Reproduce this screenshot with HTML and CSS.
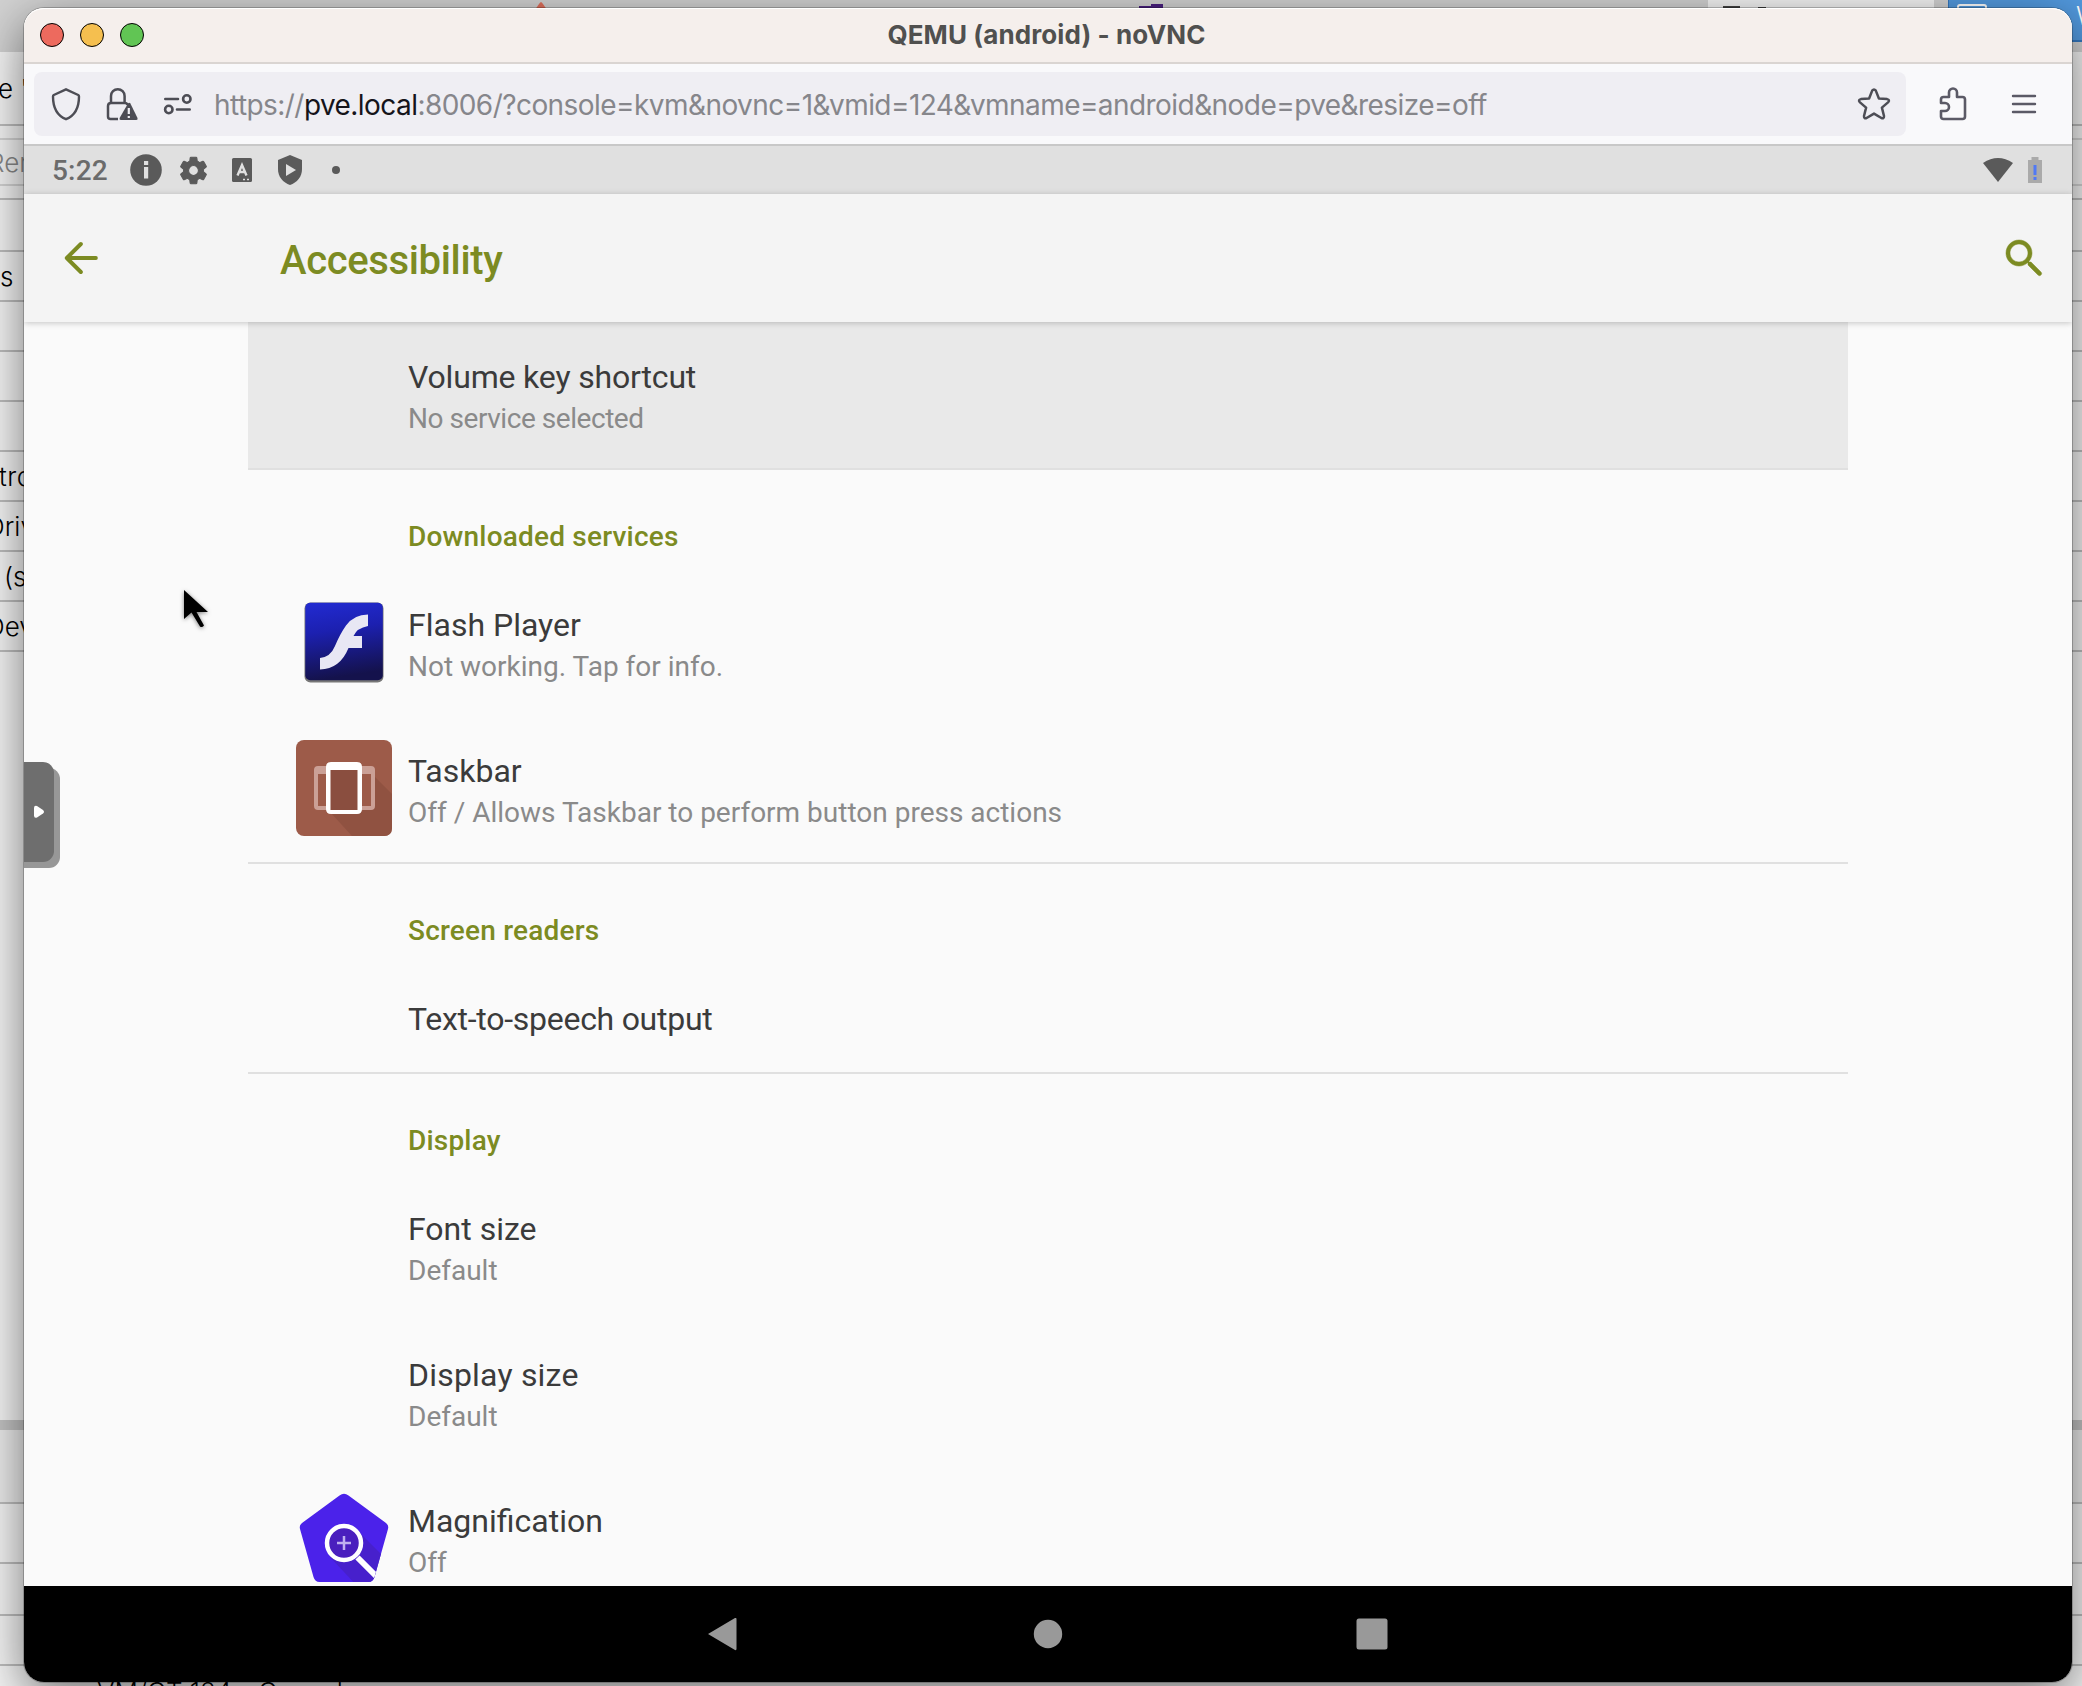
FILE: index.html
```html
<!DOCTYPE html>
<html lang="en">
<head>
<meta charset="utf-8">
<title>QEMU (android) - noVNC</title>
<link rel="stylesheet" href="styles.css">
</head>
<body>
<div class="desktop">
  <div class="backdrop">
    <div class="tabs">
      <svg class="tab-marks" width="1200" height="42" viewBox="0 0 1200 42"><path d="M535 10q5-8 6-8t6 8z" fill="#e0705c"/><path d="M1139 6h12v-2h12v8h-24z" fill="#4a2080"/></svg>
      <div class="tab-light"><svg width="60" height="12" viewBox="0 0 60 12"><path d="M15 6h17v6H15zM50 7h8v5h-8z" fill="#444"/></svg></div>
      <div class="tab-blue"><svg width="40" height="20" viewBox="0 0 40 20"><rect x="9" y="5" width="28" height="20" rx="2" fill="none" stroke="#fff" stroke-width="2"/></svg><span>W</span></div>
    </div>
    <div class="gap"></div>
    <div class="strip s-head"><span>e "</span></div>
    <div class="strip s-14 light"></div>
    <div class="strip s-46 faint"><span>Rem</span></div>
    <div class="strip s-14"></div>
    <div class="strip s-52"></div>
    <div class="strip"><span class="near">s</span></div>
    <div class="strip"></div>
    <div class="strip"></div>
    <div class="strip"></div>
    <div class="strip"><span class="tro">tro</span></div>
    <div class="strip"><span class="cap">Driv</span></div>
    <div class="strip"><span class="in">(s</span></div>
    <div class="strip"><span class="cap">Dev</span></div>
    <div class="blank"></div>
    <div class="splitter"></div>
    <div class="strip s-74 shade"></div>
    <div class="strip s-60"></div>
    <div class="strip s-52"></div>
    <div class="strip"></div>
    <div class="task"><span>VM/CT 124 - Console</span></div>
  </div>

  <div class="window">
    <div class="titlebar">
      <div class="lights"><i class="red"></i><i class="yellow"></i><i class="green"></i></div>
      <div class="title">QEMU (android) - noVNC</div>
    </div>
    <div class="toolbar">
      <div class="urlbar">
        <svg class="i-shield" width="32" height="36" viewBox="0 0 32 36" fill="none" stroke="#4d4d55" stroke-width="2.4" stroke-linejoin="round"><path d="M16 3.3L28.2 9q.8.5.8 1.4C29 21 25 29.500 16 33.200 7 29.500 3 21 3 10.400q0-.9.8-1.400z"/></svg>
        <svg class="i-lock" width="34" height="36" viewBox="0 0 34 36"><g fill="none" stroke="#4d4d55" stroke-width="2.500"><path d="M6 17V10a6.800 6.800 0 0 1 13.600 0v7M13 33H5.500Q3 33 3 30.500V20q0-3 3-3h14q2 0 2.500 2"/></g><path d="M23 17.500q1.200-1.600 2.400 0L32.500 32q.6 2-1.200 2H15.800q-1.800 0-1.200-2z" fill="#4d4d55"/><path d="M23.800 22v6M23.800 30v2" stroke="#efeef3" stroke-width="2.200"/></svg>
        <svg class="i-sliders" width="30" height="24" viewBox="0 0 30 24" fill="none" stroke="#4d4d55" stroke-width="2.600" stroke-linecap="round"><path d="M2.300 7H15M14 17.500h12.700"/><circle cx="23.800" cy="7" r="3.700"/><circle cx="5.800" cy="17.500" r="3.700"/></svg>
        <div class="url">https://<b>pve.local</b>:8006/?console=kvm&amp;novnc=1&amp;vmid=124&amp;vmname=android&amp;node=pve&amp;resize=off</div>
        <svg class="i-star" width="34" height="34" viewBox="0 0 34 34" fill="none" stroke="#4d4d55" stroke-width="2.500" stroke-linejoin="round"><path d="M15.200 3.600q1.800-2.400 3.600 0L21.900 11.500l8.200.6q3 .7 1.200 3l-6.400 5.500 2.100 8.400q.1 2.900-2.600 2L17 26.600 9.600 31q-2.700.9-2.600-2l2.100-8.400-6.400-5.500q-1.800-2.300 1.200-3l8.200-.6z"/></svg>
      </div>
      <svg class="i-puzzle" width="30" height="36" viewBox="0 0 30 36" fill="none" stroke="#5b5a66" stroke-width="2.600" stroke-linejoin="round"><path d="M3 17V13.500Q3 11 5.500 11H11V6.500a4 4 0 0 1 8 0V11h5.500Q27 11 27 13.500v17Q27 33 24.500 33h-19Q3 33 3 30.500V25h4a4 4 0 0 0 0-8z"/></svg>
      <svg class="i-menu" width="26" height="20" viewBox="0 0 26 20" stroke="#5b5a66" stroke-width="2.400" stroke-linecap="round"><path d="M2 2h22M2 10h22M2 18h22"/></svg>
    </div>

    <div class="screen">
      <div class="status">
        <span class="clock">5:22</span>
        <svg class="st" width="36" height="36" viewBox="0 0 36 36"><circle cx="18" cy="18" r="15.800" fill="#5a5a5a"/><path d="M16 15h4.200V26.500H16zM16 9h4.200v4H16z" fill="#e0e0e0"/></svg>
        <svg class="st st2" width="33" height="33" viewBox="0 0 24 24"><path fill="#5a5a5a" stroke="#5a5a5a" stroke-width=".8" d="M19.140 12.940c.04-.3.06-.61.06-.94 0-.32-.02-.64-.07-.94l2.030-1.580c.18-.14.23-.41.120-.61l-1.920-3.320c-.12-.22-.37-.29-.59-.22l-2.390.96c-.5-.38-1.030-.7-1.620-.94l-.36-2.540c-.04-.24-.24-.41-.48-.41h-3.840c-.24 0-.43.17-.47.41l-.36 2.540c-.59.24-1.130.57-1.620.94l-2.390-.96c-.22-.08-.47 0-.59.22L2.740 8.870c-.12.210-.08.470.12.610l2.030 1.580c-.05.300-.09.630-.09.940s.02.640.07.940l-2.030 1.580c-.18.140-.23.410-.12.610l1.920 3.320c.12.220.37.290.59.220l2.390-.96c.5.380 1.030.7 1.620.94l.36 2.540c.05.240.24.410.48.410h3.840c.24 0 .44-.17.47-.41l.36-2.540c.59-.24 1.130-.56 1.620-.94l2.390.96c.22.080.47 0 .59-.22l1.920-3.320c.12-.22.07-.47-.12-.61l-2.010-1.580zM12 15.600c-1.980 0-3.600-1.620-3.600-3.600s1.620-3.600 3.600-3.600 3.600 1.620 3.600 3.600-1.620 3.600-3.600 3.600z"/></svg>
        <svg class="st st3" width="22" height="26" viewBox="0 0 22 26"><rect x="1" y="1" width="20" height="24" rx="1.500" fill="#5a5a5a"/><path d="M6.500 18.500L11 8l4.500 10.500M8.500 15h5" fill="none" stroke="#e0e0e0" stroke-width="2.400"/><path d="M12 22.500h2M16 22.500h2" stroke="#e0e0e0" stroke-width="1.600"/></svg>
        <svg class="st st4" width="28" height="32" viewBox="0 0 28 32"><path d="M14 1l12 5v9c0 8-5 13.500-12 16C7 28.500 2 23 2 15V6z" fill="#5a5a5a"/><path d="M10 10l10 6-10 6z" fill="#e0e0e0"/></svg>
        <i class="dot"></i>
        <svg class="wifi" width="32" height="28" viewBox="0 0 32 28"><path d="M1 7Q16-3 31 7L16 26z" fill="#5a5a5a"/></svg>
        <svg class="battery" width="16" height="28" viewBox="0 0 16 28"><path d="M4.500 1h7v3H15v23H1V4h3.500z" fill="#aaa"/><path d="M8 9v10M8 21v3" stroke="#5079f5" stroke-width="3"/></svg>
      </div>
      <div class="appbar">
        <svg width="48" height="48" viewBox="0 0 24 24" fill="#7c8b22"><path d="M20 11H7.830l5.290-5.290q.7-.7 0-1.400t-1.400 0L4.700 11.300q-.7.7 0 1.400l7.020 7q.7.700 1.400 0t0-1.400L7.830 13H20q.9-.1.900-1T20 11z"/></svg>
        <h1>Accessibility</h1>
        <svg class="find" width="48" height="48" viewBox="0 0 24 24" fill="#7c8b22" stroke="#7c8b22" stroke-width=".25"><path d="M15.500 14h-.79l-.28-.27C15.410 12.590 16 11.110 16 9.500 16 5.910 13.090 3 9.500 3S3 5.910 3 9.500 5.910 16 9.500 16c1.610 0 3.090-.59 4.230-1.570l.27.280v.79l5 4.990q.8.700 1.490 0t0-1.490l-4.990-5zm-6 0C7.010 14 5 11.990 5 9.500S7.010 5 9.500 5 14 7.010 14 9.500 11.990 14 9.500 14z"/></svg>
      </div>
      <div class="content">
        <div class="list">
          <section>
            <div class="row hot"><div class="icon"></div><div class="txt"><h3 class="snug">Volume key shortcut</h3><p class="tight">No service selected</p></div></div>
          </section>
          <section>
            <h2>Downloaded services</h2>
            <div class="row"><div class="icon">
              <svg width="96" height="96" viewBox="0 0 96 96"><defs><linearGradient id="fl" x1="0" y1="0" x2=".15" y2="1"><stop offset="0" stop-color="#222bd2"/><stop offset=".4" stop-color="#1c20b0"/><stop offset="1" stop-color="#14124c"/></linearGradient></defs><rect x="8.500" y="8.500" width="79" height="80" rx="6" fill="#777"/><rect x="9.300" y="8.800" width="77.500" height="77.500" rx="5" fill="url(#fl)"/><path d="M72 20.500V32Q61 34 57.500 42H66V54H52.500Q44 75 24 75.500V64Q34.500 63 39 52 44 40 50 31.500 58 20.500 72 20.500z" fill="#e8e7f4"/></svg>
            </div><div class="txt"><h3>Flash Player</h3><p>Not working. Tap for info.</p></div></div>
            <div class="row"><div class="icon">
              <svg width="96" height="96" viewBox="0 0 96 96"><rect width="96" height="96" rx="8" fill="#9d5b49"/><path d="M35 73L56 96H88q8 0 8-8V54L78 36V64L62 73z" fill="#905241"/><path d="M34 29h28v42H34z" fill="#8a4e3f"/><path d="M18 30q0-4 4-4h10v8H22v32h10v4H22q-4 0-4-4zM79 30q0-4-4-4H65v8h10v32H65v4h10q4 0 4-4z" fill="#cba096"/><path fill-rule="evenodd" d="M35 22h26q5 0 5 5v42q0 5-5 5H35q-5 0-5-5V27q0-5 5-5zM34.500 30v40h27V30z" fill="#fff"/></svg>
            </div><div class="txt"><h3>Taskbar</h3><p>Off / Allows Taskbar to perform button press actions</p></div></div>
          </section>
          <section>
            <h2>Screen readers</h2>
            <div class="row single"><div class="icon"></div><div class="txt"><h3 class="close">Text-to-speech output</h3></div></div>
          </section>
          <section>
            <h2>Display</h2>
            <div class="row"><div class="icon"></div><div class="txt"><h3>Font size</h3><p>Default</p></div></div>
            <div class="row"><div class="icon"></div><div class="txt"><h3 class="wide">Display size</h3><p>Default</p></div></div>
            <div class="row"><div class="icon">
              <svg width="96" height="96" viewBox="0 -1 96 96"><defs><clipPath id="pg"><path d="M43.500 4.500Q48 1 52.500 4.500L90 32q3 2.500 2 6L78.500 86q-1.500 5-6 5h-49q-4.500 0-6-5L4 38q-1-3.500 2-6z"/></clipPath></defs><g clip-path="url(#pg)"><path d="M0 0h96v96H0z" fill="#4b22ea"/><path d="M61 39L96 74V96H62L34 66z" fill="#4720cc"/><circle cx="48" cy="52" r="17" fill="#4a1fbe" stroke="#fff" stroke-width="4.500"/><path d="M61.500 66.500L80 85" stroke="#fff" stroke-width="6"/><path d="M48 45v14M41 52h14" stroke="#c0b0f0" stroke-width="2.500"/></g></svg>
            </div><div class="txt"><h3>Magnification</h3><p>Off</p></div></div>
          </section>
        </div>
        <div class="handle"><svg width="12" height="14" viewBox="0 0 12 14"><path d="M1 3q0-3 3-2l6 4q2 1.800 0 3.500L4 12.500q-3 1-3-2z" fill="#fff"/></svg></div>
        <svg class="cursor" width="40" height="54" viewBox="0 0 40 54"><path d="M8 6V35L15.500 28.500 24 42.500Q26 44 28 41.500L20.500 28H32z" fill="#000"/></svg>
      </div>
      <div class="nav">
        <svg width="40" height="40" viewBox="0 0 40 40"><path d="M5 20L32 4q1.500-.5 1.500 1v30q0 1.500-1.500 1z" fill="#999"/></svg>
        <svg width="40" height="40" viewBox="0 0 40 40"><circle cx="20" cy="20" r="14.200" fill="#999"/></svg>
        <svg width="40" height="40" viewBox="0 0 40 40"><rect x="3.500" y="4.500" width="31" height="31" rx="2.500" fill="#999"/></svg>
      </div>
    </div>
  </div>
</div>
</body>
</html>
```
FILE: styles.css
```css
* { box-sizing: border-box; }
body { margin: 0; }
h1, h2, h3, p { margin: 0; font-weight: 400; }
svg { display: block; flex: none; }

.desktop {
  position: relative;
  width: 2082px;
  height: 1686px;
  overflow: hidden;
  font-family: Roboto, "Liberation Sans", sans-serif;
}

/* Page behind the console window */
.backdrop {
  display: flex;
  flex-direction: column;
  height: 1686px;
  background: #f5f5f5;
  font: 300 26px Inter, "Liberation Sans", sans-serif;
  color: #000;
}
.tabs { display: flex; height: 42px; background: #d2d2d2; }
.tab-marks { margin-right: 508px; }
.tab-light { width: 226px; background: #f4f4f4; margin-right: 14px; }
.tab-blue {
  display: flex;
  justify-content: space-between;
  width: 134px;
  overflow: hidden;
  background: #5299de;
  border-bottom: 2px solid #3478c0;
  border-left: 1px solid #3478c0;
  color: #fff;
}
.tab-blue span { width: 6px; line-height: 31px; }
.gap { height: 10px; background: #d2d2d2; }
.strip {
  display: flex;
  align-items: center;
  flex: none;
  height: 50px;
  border-bottom: 2px solid #bebebe;
  white-space: nowrap;
}
.strip span { margin-left: -2px; }
.strip .near { margin-left: 0; }
.strip .in { margin-left: 4px; }
.strip .cap { margin-left: -14px; }
.strip .tro { margin-left: -1px; letter-spacing: .6px; }
.s-head { height: 74px; }
.s-14 { height: 14px; }
.s-46 { height: 46px; }
.s-52 { height: 52px; }
.s-60 { height: 60px; }
.s-74 { height: 74px; }
.shade { background: #ececec; }
.light { border-color: #d4d4d4; }
.faint { color: #888; border-color: #d4d4d4; }
.strip.faint span { margin-left: -12px; }
.blank { height: 768px; }
.splitter { flex: none; height: 10px; background: #c4c4c4; }
.task { height: 20px; overflow: hidden; padding: 10px 0 0 97px; line-height: 32px; }

/* Console window */
.window {
  position: absolute;
  left: 24px;
  top: 8px;
  width: 2048px;
  height: 1674px;
  border-radius: 20px;
  background: #fafafa;
  box-shadow: 0 0 0 1px rgba(0,0,0,.22), 0 14px 50px rgba(0,0,0,.54);
}
.titlebar {
  display: grid;
  grid-template-columns: 200px 1fr 203px;
  align-items: center;
  height: 56px;
  padding-bottom: 2px;
  background: #f5efec;
  border-bottom: 2px solid #dad5d2;
  border-radius: 20px 20px 0 0;
  box-shadow: inset 0 1px #fff;
}
.lights { display: flex; gap: 16px; padding-left: 16px; padding-top: 2px; }
.lights i { width: 24px; height: 24px; border-radius: 50%; border: 1px solid; }
.red { background: #ed6a5e; border-color: #d5544a; }
.yellow { background: #f5bf4f; border-color: #dba43c; }
.green { background: #61c554; border-color: #50ab42; }
.title {
  text-align: center;
  font: 700 26px Inter, sans-serif;
  letter-spacing: .1px;
  color: #50504f;
}
.toolbar {
  display: flex;
  align-items: center;
  height: 82px;
  padding-left: 10px;
  background: #f9f9fb;
  border-bottom: 2px solid #c8c8c8;
}
.urlbar {
  display: flex;
  align-items: center;
  width: 1872px;
  height: 64px;
  padding-left: 16px;
  border-radius: 8px;
  background: #efeef3;
}
.i-lock { margin-left: 23px; }
.i-sliders { margin-left: 24px; }
.url {
  margin-left: 21px;
  width: 1643px;
  padding-top: 2px;
  white-space: nowrap;
  font: 400 28px Inter, sans-serif;
  letter-spacing: -.56px;
  color: #86868b;
}
.url b { font-weight: 400; color: #15141a; }
.i-puzzle { margin-left: 32px; }
.i-menu { margin-left: 43px; }

/* Android screen */
.screen {
  display: flex;
  flex-direction: column;
  height: 1536px;
  overflow: hidden;
  border-radius: 0 0 20px 20px;
}
.status {
  display: flex;
  align-items: center;
  flex: none;
  height: 48px;
  padding-left: 28px;
  background: #e0e0e0;
}
.clock { width: 76px; font-size: 28px; font-weight: 500; letter-spacing: .2px; color: #6b6b6b; }
.st2 { margin-left: 13px; }
.st3 { margin-left: 21px; }
.st4 { margin-left: 23px; }
.dot { width: 8px; height: 8px; margin-left: 28px; border-radius: 50%; background: #5a5a5a; }
.wifi { margin-left: auto; }
.battery { margin: 0 29px 0 13px; }
.appbar {
  display: flex;
  align-items: center;
  flex: none;
  height: 128px;
  padding-left: 32px;
  background: #f4f4f4;
  box-shadow: 0 1px 6px rgba(0,0,0,.22);
  z-index: 1;
}
.appbar h1 {
  margin-left: 176px;
  padding-top: 5px;
  font-size: 40px;
  font-weight: 500;
  letter-spacing: -.35px;
  color: #7c8b22;
}
.find { margin-left: auto; margin-right: 24px; }
.content { position: relative; height: 1264px; flex: none; overflow: hidden; background: #fafafa; }
.list { width: 1600px; margin-left: 224px; }
section + section { border-top: 2px solid #e0e0e0; }
section h2 {
  height: 100px;
  padding: 48px 0 0 160px;
  font-size: 28px;
  line-height: 38px;
  font-weight: 500;
  letter-spacing: .2px;
  color: #7c8b22;
}
.row { display: flex; align-items: center; height: 146px; padding: 0 0 2px 48px; }
.hot { background: #e9e9e9; }
.single { height: 108px; }
.icon { width: 96px; margin-right: 16px; }
.txt { padding-top: 7px; }
.single .txt { padding-top: 4px; }
.txt h3 { font-size: 32px; line-height: 42px; color: #3b3b3b; }
.txt p { font-size: 28px; line-height: 41px; color: #8a8a8a; }
.txt .snug { letter-spacing: -.17px; }
.txt .close { letter-spacing: -.27px; }
.txt .wide { letter-spacing: .2px; }
.txt .tight { letter-spacing: -.45px; }
.handle {
  position: absolute;
  left: 0;
  top: 440px;
  width: 30px;
  height: 100px;
  padding: 43px 0 0 9px;
  border-radius: 0 11px 11px 0;
  background: #6e6e6e;
}
/* Lower layer of the handle, cut flush with the screen's left edge */
.handle::before {
  content: "";
  position: absolute;
  z-index: -1;
  left: 0;
  top: 6px;
  width: 36px;
  height: 100px;
  border-radius: 0 11px 11px 0;
  background: #979797;
}
.handle::after {
  content: "";
  position: absolute;
  z-index: -1;
  inset: 0;
  border-radius: 0 11px 11px 0;
  background: #6e6e6e;
}
.handle { z-index: 0; background: none; }
.cursor { position: absolute; left: 152px; top: 262px; filter: drop-shadow(0 1px 2px rgba(0,0,0,.5)); }
.nav {
  display: flex;
  align-items: center;
  justify-content: center;
  gap: 285px;
  height: 96px;
  background: #000;
}
```
